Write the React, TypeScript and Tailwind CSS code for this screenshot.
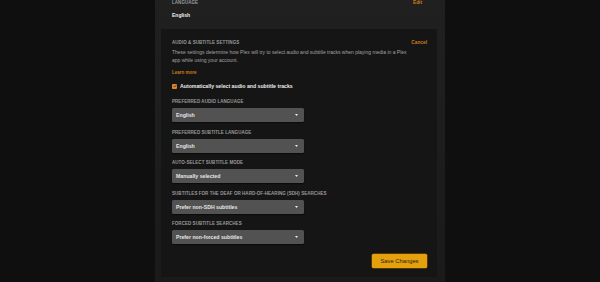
import React from "react";

const font = { fontFamily: '"Liberation Sans", Arial, sans-serif' };

function Label({ children }: { children: React.ReactNode }) {
  return (
    <div className="text-[4.5px] leading-[6px] font-bold uppercase text-[#9a9a9a] tracking-[0.05px]">
      {children}
    </div>
  );
}

function Select({ value }: { value: string }) {
  return (
    <div className="mt-[3px] w-[132px] h-[14px] rounded-[1.5px] bg-[#525252] shadow-[0_1px_1px_rgba(0,0,0,0.5)] flex items-center justify-between pl-[4px] pr-[6px]">
      <span className="text-[5.2px] leading-[6px] font-bold text-[#e6e6e6]">{value}</span>
      <svg width="3" height="2" viewBox="0 0 3 2">
        <path d="M0 0 L3 0 L1.5 2 Z" fill="#eaeaea" />
      </svg>
    </div>
  );
}

function Group({ label, value, first }: { label: string; value: string; first?: boolean }) {
  return (
    <div className={first ? "mt-[10px]" : "mt-[7.5px]"}>
      <Label>{label}</Label>
      <Select value={value} />
    </div>
  );
}

export default function App() {
  return (
    <div className="w-[600px] h-[282px] bg-[#0f0f0f] flex justify-center overflow-hidden" style={font}>
      <div className="w-[290px] h-full bg-gradient-to-b from-[#202020] to-[#1a1a1a] pl-[6px] pr-[8px] flex flex-col">
        <div className="pl-[11px] pr-[15px]">
          <div className="flex justify-between items-start">
            <Label>Language</Label>
            <span className="text-[4.8px] leading-[6px] font-bold text-[#cc7b19]">Edit</span>
          </div>
          <div className="mt-[6.3px] text-[5px] leading-[6px] font-bold text-[#f0f0f0]">English</div>
        </div>
        <div className="mt-[10.7px] bg-[#151515] pt-[11px] pl-[11px] pr-[10px] pb-[9px] flex flex-col">
          <div className="flex justify-between items-center">
            <Label>Audio &amp; Subtitle Settings</Label>
            <span className="text-[4.8px] leading-[6px] font-bold text-[#cc7b19]">Cancel</span>
          </div>
          <p className="mt-[2px] w-[250px] whitespace-nowrap text-[5px] leading-[8.5px] text-[#a3a3a3]">
            These settings determine how Plex will try to select audio and subtitle tracks when playing media in a Plex
            <br />
            app while using your account.
          </p>
          <div className="mt-[5.5px] text-[4.5px] leading-[6px] font-bold text-[#cc7b19]">Learn more</div>
          <div className="mt-[7px] flex items-center gap-[3px]">
            <div className="w-[5px] h-[5px] rounded-[1px] bg-[#e0822a] flex items-center justify-center">
              <svg width="4" height="4" viewBox="0 0 4 4">
                <path d="M0.8 2 L1.7 2.9 L3.3 1.1" stroke="#2a1a08" strokeWidth="0.7" fill="none" />
              </svg>
            </div>
            <span className="text-[5.2px] leading-[6px] font-bold text-[#ececec]">
              Automatically select audio and subtitle tracks
            </span>
          </div>
          <Group first label="Preferred Audio Language" value="English" />
          <Group label="Preferred Subtitle Language" value="English" />
          <Group label="Auto-Select Subtitle Mode" value="Manually selected" />
          <Group label="Subtitles for the Deaf or Hard-of-Hearing (SDH) Searches" value="Prefer non-SDH subtitles" />
          <Group label="Forced Subtitle Searches" value="Prefer non-forced subtitles" />
          <div className="mt-[9.5px] flex justify-end">
            <button className="w-[55px] h-[14px] rounded-[1.5px] bg-[#e5a00d] shadow-[0_0_0_0.5px_#8a5d06] text-[5.8px] leading-[6px] text-[#2b1e05] flex items-center justify-center">
              Save Changes
            </button>
          </div>
        </div>
      </div>
    </div>
  );
}
